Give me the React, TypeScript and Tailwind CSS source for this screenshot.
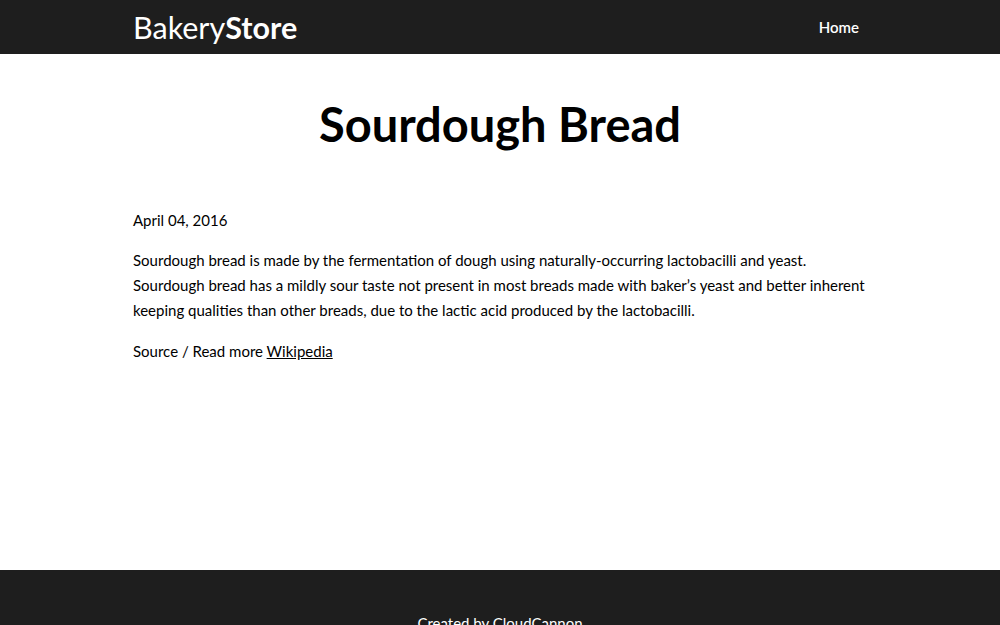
const font = { fontFamily: "Lato, 'Open Sans', sans-serif" }

export default function App() {
  return (
    <div className="min-h-[625px] flex flex-col bg-white text-black" style={font}>
      {/* Header */}
      <header className="h-[54px] bg-[#1e1e1e] text-white">
        <div className="w-[734px] mx-auto h-full flex items-center justify-between">
          <a className="text-[30.5px] leading-none">
            Bakery<span className="font-bold">Store</span>
          </a>
          <nav className="text-[15px] font-semibold pr-[8px]">Home</nav>
        </div>
      </header>

      {/* Post */}
      <main className="flex-1 w-[734px] mx-auto pb-[40px]">
        <h1 className="text-[47px] font-bold text-center leading-none pt-[47px]">Sourdough Bread</h1>
        <p className="text-[15px] mt-[60px] leading-[25px]">April 04, 2016</p>
        <p className="text-[15px] mt-[15px] leading-[25px]">
          <span className="block whitespace-nowrap">
            Sourdough bread is made by the fermentation of dough using naturally-occurring lactobacilli and yeast.
          </span>
          <span className="block whitespace-nowrap">
            Sourdough bread has a mildly sour taste not present in most breads made with baker’s yeast and better inherent
          </span>
          <span className="block whitespace-nowrap">
            keeping qualities than other breads, due to the lactic acid produced by the lactobacilli.
          </span>
        </p>
        <p className="text-[15px] mt-[16px] leading-[25px]">
          Source / Read more <a className="underline">Wikipedia</a>
        </p>
      </main>

      {/* Footer */}
      <footer className="h-[55px] bg-[#1e1e1e] text-white text-center text-[15px] pt-[42px]">
        Created by CloudCannon
      </footer>
    </div>
  )
}
